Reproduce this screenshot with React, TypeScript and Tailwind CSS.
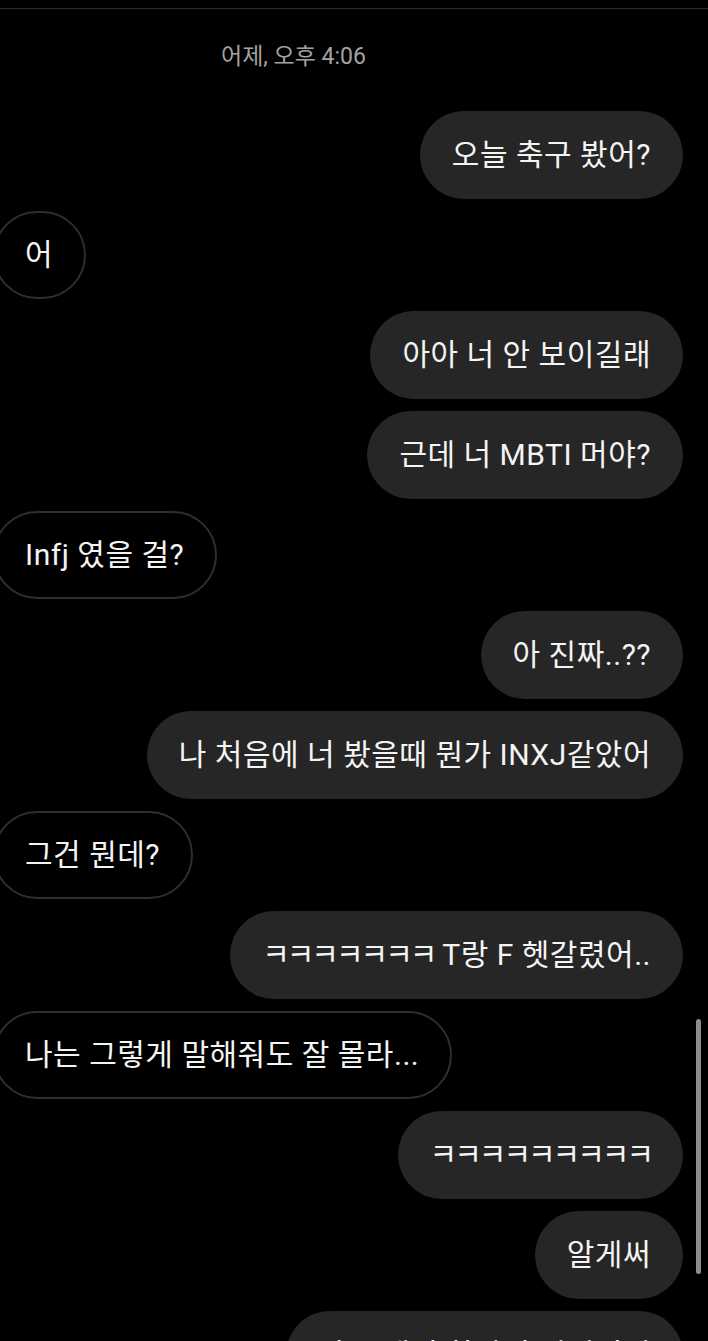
const FONT = "font-['Roboto','Noto_Sans_CJK_KR',sans-serif]";

type Msg = { me: boolean; text: string };

const MESSAGES: Msg[] = [
  { me: true, text: "오늘 축구 봤어?" },
  { me: false, text: "어" },
  { me: true, text: "아아 너 안 보이길래" },
  { me: true, text: "근데 너 MBTI 머야?" },
  { me: false, text: "Infj 였을 걸?" },
  { me: true, text: "아 진짜..??" },
  { me: true, text: "나 처음에 너 봤을때 뭔가 INXJ같았어" },
  { me: false, text: "그건 뭔데?" },
  { me: true, text: "ㅋㅋㅋㅋㅋㅋㅋ T랑 F 헷갈렸어.." },
  { me: false, text: "나는 그렇게 말해줘도 잘 몰라..." },
  { me: true, text: "ㅋㅋㅋㅋㅋㅋㅋㅋㅋ" },
  { me: true, text: "알게써" },
  { me: true, text: "나도 애기 할말이 있었어서" },
];

// the phone font draws ㅋ narrower than Noto, so squeeze those runs a bit
function Text({ text }: { text: string }) {
  const parts = text.split(/(ㅋ+)/).filter(Boolean);
  return (
    <span>
      {parts.map((p, i) =>
        p[0] === "ㅋ" ? (
          <span key={i} className="tracking-[-3px]">
            {p}
          </span>
        ) : (
          <span key={i}>{p}</span>
        )
      )}
    </span>
  );
}

function Bubble({ me, text }: Msg) {
  if (me) {
    return (
      <div className="self-end flex items-center h-[88px] shrink-0 rounded-full bg-[#262626] px-8 text-[30px] leading-none tracking-[0.5px] text-[#f4f4f4] whitespace-pre">
        <Text text={text} />
      </div>
    );
  }
  return (
    <div className="self-start -ml-[7px] flex items-center h-[88px] shrink-0 rounded-full border-2 border-[#2e2e2e] bg-black pl-[30px] pr-[31px] text-[30px] leading-none tracking-[0.5px] text-[#f4f4f4] whitespace-pre">
      <Text text={text} />
    </div>
  );
}

export default function App() {
  return (
    <div className={`relative w-[708px] h-[1341px] overflow-hidden bg-black ${FONT}`}>
      <div className="pt-2">
        <div className="h-px bg-[#2c2c2c]" />
      </div>

      <div className="w-[587px] mt-[34px] text-center text-[23px] leading-[28px] text-[#a3a3a3]">
        어제, 오후 4:06
      </div>

      <div className="mt-[40px] flex flex-col gap-3 pr-[25px]">
        {MESSAGES.map((m, i) => (
          <Bubble key={i} {...m} />
        ))}
      </div>

      {/* scroll indicator */}
      <div className="absolute left-[696px] top-[1019px] w-[5px] h-[255px] rounded-full bg-[#8c8c8c]" />
    </div>
  );
}
